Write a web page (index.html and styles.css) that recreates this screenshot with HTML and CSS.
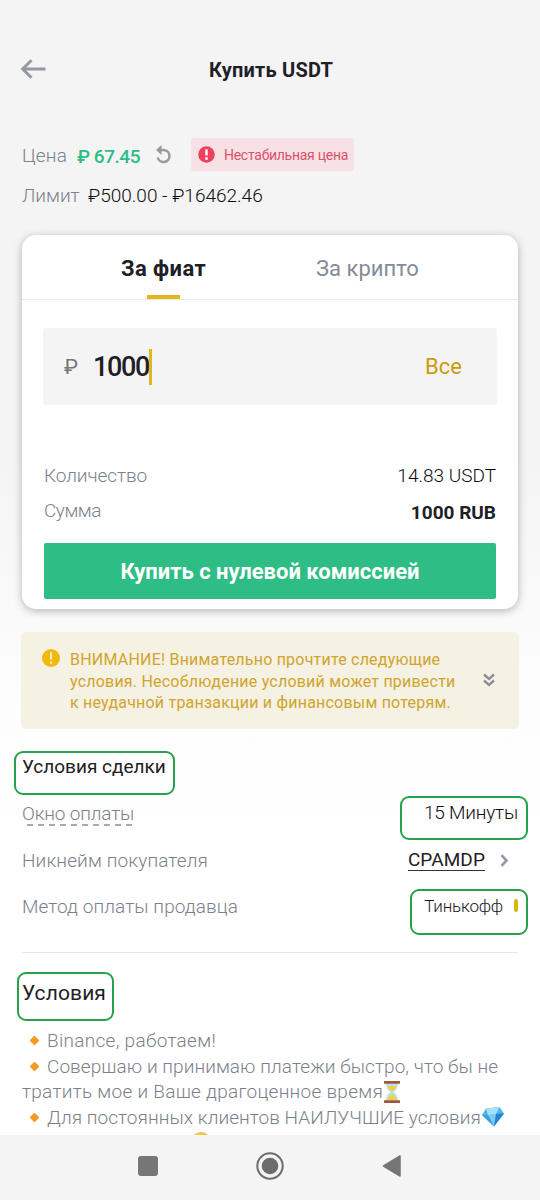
FILE: index.html
```html
<!DOCTYPE html>
<html lang="ru">
<head>
<meta charset="utf-8">
<title>Купить USDT</title>
<link rel="stylesheet" href="styles.css">
</head>
<body>
<div class="screen">
  <header class="topbar">
    <svg class="back" width="26" height="20" viewBox="0 0 26 20"><path d="M25.500 10H3M11.500 1.200L2.700 10l8.800 8.800" fill="none" stroke="#9299a5" stroke-width="3"/></svg>
    <h1 class="title">Купить USDT</h1>
  </header>

  <div class="price-row">
    <span class="label l-price">Цена</span>
    <span class="price">₽ 67.45</span>
    <svg class="refresh" width="18" height="20" viewBox="0 0 18 20"><path d="M4 5H9a6 6 0 1 1-6.300 7.500" fill="none" stroke="#999" stroke-width="2.500"/><path d="M6.500 0v10L1 5z" fill="#999"/></svg>
    <span class="badge">
      <svg width="17" height="17" viewBox="0 0 17 17"><circle cx="8.500" cy="8.500" r="8.300" fill="#f0405f"/><path d="M8.500 3.300v6.200M8.500 11.300v2.400" stroke="#fff" stroke-width="2.400"/></svg>
      <span class="badge-text">Нестабильная цена</span>
    </span>
  </div>
  <div class="limit-row">
    <span class="label l-limit">Лимит</span>
    <span class="limit">₽500.00 - ₽16462.46</span>
  </div>

  <section class="card">
    <nav class="tabs">
      <div class="tab tab-on">За фиат</div>
      <div class="tab tab-off">За крипто</div>
    </nav>
    <div class="field">
      <span class="cur">₽</span>
      <span class="amount">1000</span><span class="caret"></span>
      <span class="all">Все</span>
    </div>
    <div class="line line-qty"><span class="label l-qty">Количество</span><span class="qty">14.83 USDT</span></div>
    <div class="line line-sum"><span class="label l-sum">Сумма</span><span class="sum">1000 RUB</span></div>
    <div class="buy">Купить с нулевой комиссией</div>
  </section>

  <section class="notice">
    <svg class="warn" width="18" height="18" viewBox="0 0 18 18"><circle cx="9" cy="9" r="9" fill="#f0b90b"/><path d="M9 3.300v7.200M9 12.500v2.200" stroke="#fff8e0" stroke-width="1.800"/></svg>
    <div class="notice-text">
      <div>ВНИМАНИЕ! Внимательно прочтите следующие</div>
      <div>условия. Несоблюдение условий может привести</div>
      <div>к неудачной транзакции и финансовым потерям.</div>
    </div>
    <svg class="more" width="12" height="14" viewBox="0 0 12 14"><path d="M1 1.500l5 4.500 5-4.500M1 7.500L6 12l5-4.500" fill="none" stroke="#8b8f94" stroke-width="2.400"/></svg>
  </section>

  <section class="deal">
    <div class="row row-head"><span class="mark mark-deal">Условия сделки</span></div>
    <div class="row"><span class="label l-window">Окно оплаты<svg class="dashes" width="107" height="2" viewBox="0 0 107 2"><path d="M0 1h107" stroke="#8b9098" stroke-width="1.600" stroke-dasharray="6 5"/></svg></span><span class="mark mark-time"><span class="time">15 Минуты</span></span></div>
    <div class="row row-nick"><span class="label l-nick">Никнейм покупателя</span><span class="nick-wrap"><span class="nick">CPAMDP</span><svg width="9" height="13" viewBox="0 0 9 13"><path d="M1.500 1.200l5 5.300-5 5.300" fill="none" stroke="#9299a5" stroke-width="2.600"/></svg></span></div>
    <div class="row row-method"><span class="label l-method">Метод оплаты продавца</span><span class="mark mark-bank"><span class="bank">Тинькофф</span><span class="pill"></span></span></div>
  </section>

  <section class="terms">
    <div class="terms-head"><span class="mark mark-terms">Условия</span></div>
    <div class="t-line"><i class="diamond"></i><span class="t1">Binance, работаем!</span></div>
    <div class="t-line"><i class="diamond"></i><span class="t2">Совершаю и принимаю платежи быстро, что бы не</span></div>
    <div class="t-line"><span class="t3">тратить мое и Ваше драгоценное время</span><svg class="glass" width="16" height="22" viewBox="0 0 16 22"><path d="M2 2h12c0 5-2 7-4.500 9C12 13 14 15 14 20H2c0-5 2-7 4.500-9C4 9 2 7 2 2z" fill="#b9dff0"/><path d="M3.500 5h9c-.7 2.500-2.500 4-4.500 5.500C6 9 4.200 7.500 3.500 5zM8 13c2 1.500 4 3 4.500 6h-9C4 16 6 14.500 8 13z" fill="#f2cf45"/><path d="M0 0h16v2.800H0zM0 19.200h16V22H0z" fill="#a4573c"/></svg></div>
    <div class="t-line"><i class="diamond"></i><span class="t4">Для постоянных клиентов НАИЛУЧШИЕ условия</span><svg class="gem" width="22" height="20" viewBox="0 0 22 20"><path d="M4 1.500L17.500 0 22 6.500 12 19.500 0 8z" fill="#4fb4ea"/><path d="M4 1.500L17.500 0 14 7 6 8z" fill="#a6e0f8"/><path d="M6 8l8-1-2 12.500z" fill="#7ccdf4"/><path d="M14 7l8-.5-10 13z" fill="#2485cf"/><path d="M0 8l6 0 6 11.500z" fill="#3d9fe0"/></svg></div>
    <div class="t-line t-cut"><i class="face"></i></div>
  </section>

  <footer class="navbar">
    <svg width="20" height="20" viewBox="0 0 20 20"><rect width="20" height="20" rx="3" fill="#767676"/></svg>
    <svg width="28" height="28" viewBox="0 0 28 28"><circle cx="14" cy="14" r="12.700" fill="none" stroke="#6c6c6c" stroke-width="2"/><circle cx="14" cy="14" r="8.300" fill="#6c6c6c"/></svg>
    <svg width="20" height="24" viewBox="0 0 20 24"><path d="M18 2v20L1.500 12z" fill="#767676" stroke="#767676" stroke-width="1.500" stroke-linejoin="round"/></svg>
  </footer>
</div>
</body>
</html>
```
FILE: styles.css
```css
* { box-sizing: border-box; }
body { margin: 0; font-family: Roboto, "Noto Sans", sans-serif; }
svg { display: block; flex: none; }
.screen { width: 540px; height: 1200px; overflow: hidden; display: flex; flex-direction: column; background: linear-gradient(#f4f4f4 0, #f4f4f4 460px, #fdfdfd 700px, #fff 860px); color: #1e2026; font-size: 19px; white-space: nowrap; }
.label { color: #7b818b; font-weight: 300; }

.topbar { height: 138px; flex: none; display: grid; grid-template-columns: 209px 1fr; align-items: start; }
.back { margin: 59px 0 0 20px; }
.title { margin: 58px 0 0; font-size: 20px; line-height: 24px; font-weight: 700; letter-spacing: .2px; }

.price-row { height: 33px; flex: none; display: flex; align-items: center; padding-left: 22px; }
.l-price { width: 45px; padding-top: 2px; letter-spacing: .2px; }
.price { width: 64px; margin-left: 10px; padding-top: 3px; color: #2ebd85; font-weight: 500; letter-spacing: -.46px; }
.refresh { margin-left: 14px; }
.badge { margin-left: 18px; width: 163px; height: 33px; background: #f8e1e4; border-radius: 3px; display: flex; align-items: center; padding-left: 7px; gap: 9px; font-size: 14px; color: #d9516b; letter-spacing: -.27px; }
.limit-row { height: 50px; flex: none; display: flex; align-items: center; padding: 0 0 1px 22px; }
.l-limit { width: 66px; }
.limit { font-weight: 300; color: #0c0e12; }

.card { margin: 14px 22px 0; height: 374px; flex: none; background: #fff; border-radius: 14px; box-shadow: 0 2px 8px rgba(0,0,0,.28); }
.tabs { height: 65px; border-bottom: 1px solid #e8e9ea; display: grid; grid-template-columns: 282px 1fr; font-size: 22px; }
.tab { line-height: 68px; position: relative; }
.tab-on { padding-left: 99px; font-weight: 700; letter-spacing: .4px; }
.tab-on::after { content: ""; position: absolute; left: 125px; bottom: 4px; width: 33px; height: 4px; background: #e3b51f; }
.tab-off { padding-left: 12px; color: #848b99; }
.field { margin: 28px 21px 0; height: 77px; background: #f4f4f4; border-radius: 3px; display: flex; align-items: center; padding: 0 35px 0 21px; }
.cur { width: 29px; font-size: 21px; color: #777; }
.amount { width: 56px; font-size: 27px; font-weight: 500; letter-spacing: -1.35px; }
.caret { width: 3px; height: 36px; background: #e3b51f; }
.all { margin-left: auto; font-size: 22px; color: #cb9b0c; }
.line { display: flex; justify-content: space-between; align-items: center; padding: 0 22px; }
.line-qty { margin-top: 52px; height: 36px; }
.line-sum { height: 38px; }
.l-qty { letter-spacing: -.08px; }
.l-sum { padding-bottom: 3px; letter-spacing: -.47px; }
.qty { font-weight: 300; color: #0c0e12; }
.sum { font-weight: 700; }
.buy { margin: 12px 22px 0; height: 56px; border-radius: 2px; background: #2ebd85; color: #fff; font-size: 22px; font-weight: 700; line-height: 58px; text-align: center; }

.notice { margin: 23px 21px 0; height: 97px; flex: none; border-radius: 5px; background: #f5f1e3; display: flex; align-items: flex-start; padding: 17px 24px 0 21px; color: #d0a42e; font-size: 16px; line-height: 21.5px; letter-spacing: .21px; }
.notice-text { margin-left: 10px; }
.more { margin: 24px 0 0 auto; }

.deal { height: 201px; flex: none; margin: 23px 22px 0; border-bottom: 1px solid #e6e6e8; }
.row { display: flex; justify-content: space-between; align-items: center; height: 46px; }
.row-head { height: 30px; margin-bottom: 8px; padding-bottom: 2px; }
.row-nick { height: 48px; }
.row-method { height: 44px; }
/* Green frames drawn around the highlighted values */
.mark { position: relative; display: inline-flex; align-items: center; height: 22px; }
.mark::after { content: ""; position: absolute; border: 2px solid #27a24c; border-radius: 9px; }
.mark-deal::after { inset: -4px -9px -18px -8px; }
.mark-time { margin-top: -1px; }
.mark-time::after { inset: -6px -10px -16px -24px; }
.mark-bank { margin-top: -1px; }
.mark-bank::after { inset: -6px -10px -18px -14px; }
.mark-terms::after { inset: -10px -8px -17px -5px; }
.l-window { position: relative; letter-spacing: -.18px; }
.l-nick { letter-spacing: .12px; }
.l-method { letter-spacing: .08px; }
.dashes { position: absolute; left: 5px; bottom: -1px; }
.time { font-weight: 300; letter-spacing: -.2px; color: #0c0e12; }
.nick-wrap { display: flex; align-items: center; gap: 15px; padding-right: 9px; }
.nick { border-bottom: 1px solid #333; line-height: 20px; letter-spacing: .1px; }
.bank { font-size: 17px; letter-spacing: -.2px; color: #16181c; font-weight: 300; }
.pill { width: 4px; height: 13px; border-radius: 2px; background: #dcb80c; margin-left: 11px; }

.terms { padding: 0 22px; height: 182px; flex: none; overflow: hidden; }
.terms-head { height: 75px; padding-top: 28px; font-size: 21px; letter-spacing: .1px; }
.t-line { height: 25.5px; display: flex; align-items: center; color: #7b818b; font-weight: 300; }
.diamond { width: 7px; height: 7px; margin: 0 9px 0 9px; border-radius: 1px; background: #f29a22; transform: rotate(45deg); flex: none; }
.t1 { letter-spacing: .3px; }
.t2, .t4 { letter-spacing: .06px; }
.t3 { letter-spacing: .27px; }
.glass { margin-left: 1px; }
.gem { margin-left: 1px; }
.face { width: 20px; height: 20px; border-radius: 50%; background: #f0c646; margin: 2px 0 0 169px; flex: none; }
.t-cut { align-items: flex-start; height: 10px; }

.navbar { flex: none; height: 65px; background: #f4f4f4; display: flex; align-items: center; padding: 0 0 3px 138px; gap: 98px; }
```
